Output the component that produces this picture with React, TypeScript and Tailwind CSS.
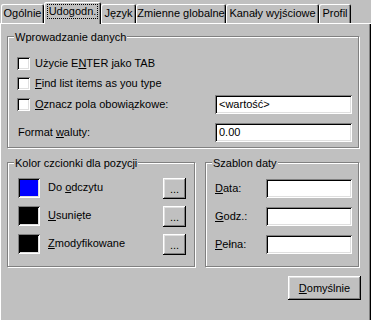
import React from "react";

const RAISED =
  "shadow-[inset_-1px_-1px_#000,inset_1px_1px_#fff,inset_-2px_-2px_#808080,inset_2px_2px_#dfdfdf]";
const SUNKEN =
  "shadow-[inset_1px_1px_#808080,inset_-1px_-1px_#fff,inset_2px_2px_#000,inset_-2px_-2px_#dfdfdf]";
const TAB = "shadow-[inset_1px_1px_#fff,inset_-1px_0_#000,inset_-2px_0_#808080] rounded-t-[2px]";
const ETCHED = "border border-[#808080] shadow-[inset_1px_1px_#fff,1px_1px_#fff]";

function Tab({ label, w }: { label: string; w: string }) {
  return (
    <div className={`${w} h-[19px] ${TAB} flex justify-center items-start pt-[3px] leading-[13px] whitespace-nowrap`}>
      {label}
    </div>
  );
}

function Group({ title, className, children }: { title: string; className: string; children: React.ReactNode }) {
  return (
    <div className={`relative ${ETCHED} ${className}`}>
      <div className="absolute -top-[5px] left-[6px] bg-[#c0c0c0] px-[1px] leading-[11px] whitespace-nowrap">{title}</div>
      {children}
    </div>
  );
}

function CheckBox() {
  return <div className={`w-[13px] h-[13px] bg-white shrink-0 ${SUNKEN}`} />;
}

function Field({ w, value }: { w: string; value?: string }) {
  return (
    <div className={`${w} h-[19px] bg-white ${SUNKEN} flex items-center pl-[4px] leading-[13px] shrink-0`}>
      {value}
    </div>
  );
}

function DotsButton() {
  return (
    <div className={`w-[23px] h-[21px] ml-auto ${RAISED} flex items-end justify-center pb-[4px] leading-[11px]`}>
      ...
    </div>
  );
}

export default function App() {
  return (
    <div className="w-[371px] h-[320px] bg-[#c0c0c0] overflow-hidden flex flex-col text-[11px] text-black font-['Liberation_Sans',Arial,sans-serif]">
      {/* tab strip */}
      <div className="h-[23px] flex items-end pl-[1px] shrink-0">
        <Tab label="Ogólnie" w="w-[43px]" />
        <div className={`relative z-10 w-[57px] h-[22px] -mb-[1px] bg-[#c0c0c0] ${TAB} flex justify-center items-start pt-[2px]`}>
          <span className="border border-dotted border-black px-[1px] h-[15px] leading-[13px] whitespace-nowrap">Udogodn.</span>
        </div>
        <Tab label="Język" w="w-[35px]" />
        <Tab label="Zmienne globalne" w="w-[90px]" />
        <Tab label="Kanały wyjściowe" w="w-[93px]" />
        <Tab label="Profil" w="w-[32px]" />
      </div>

      {/* panel */}
      <div className="flex-1 shadow-[inset_1px_1px_#fff,inset_-1px_0_#000,inset_-2px_0_#808080] pt-[13px] flex flex-col">
        <Group title="Wprowadzanie danych" className="ml-[7px] w-[352px] h-[112px] pt-[20px] pl-[9px] pr-[6px] flex flex-col">
          <div className="flex items-center h-[13px]">
            <CheckBox />
            <span className="ml-[5px] leading-[13px]">
              Użycie E<u>N</u>TER jako TAB
            </span>
          </div>
          <div className="flex items-center h-[13px] mt-[7px]">
            <CheckBox />
            <span className="ml-[5px] leading-[13px]">
              <u>F</u>ind list items as you type
            </span>
          </div>
          <div className="flex items-center h-[19px] mt-[5px]">
            <CheckBox />
            <span className="ml-[5px] leading-[13px]">
              <u>O</u>znacz pola obowiązkowe:
            </span>
            <div className="ml-auto">
              <Field w="w-[137px]" value="<wartość>" />
            </div>
          </div>
          <div className="flex items-center h-[19px] mt-[9px]">
            <span className="ml-[1px] leading-[13px]">
              Format <u>w</u>aluty:
            </span>
            <div className="ml-auto">
              <Field w="w-[137px]" value="0.00" />
            </div>
          </div>
        </Group>

        <div className="flex mt-[14px] ml-[7px]">
          <Group title="Kolor czcionki dla pozycji" className="w-[188px] h-[105px] pt-[15px] pl-[10px] pr-[8px] flex flex-col gap-[7px]">
            {[
              { c: "bg-[#0000ff]", l: <>Do <u>o</u>dczytu</> },
              { c: "bg-black", l: <><u>U</u>sunięte</> },
              { c: "bg-black", l: <><u>Z</u>modyfikowane</> },
            ].map((r, i) => (
              <div key={i} className="flex items-start h-[21px]">
                <div className={`w-[22px] h-[20px] ${r.c} ${SUNKEN}`} />
                <span className="ml-[8px] mt-[3px] leading-[13px]">{r.l}</span>
                <DotsButton />
              </div>
            ))}
          </Group>

          <Group title="Szablon daty" className="ml-[10px] w-[154px] h-[105px] pt-[16px] pl-[9px] pr-[6px] flex flex-col gap-[9px]">
            {[
              <><u>D</u>ata:</>,
              <><u>G</u>odz.:</>,
              <><u>P</u>ełna:</>,
            ].map((l, i) => (
              <div key={i} className="flex items-center h-[19px]">
                <span className="leading-[13px]">{l}</span>
                <div className="ml-auto">
                  <Field w="w-[86px]" />
                </div>
              </div>
            ))}
          </Group>
        </div>

        <div className="flex justify-end mt-[9px] mr-[10px]">
          <div className={`w-[73px] h-[24px] ${RAISED} flex items-center justify-center leading-[13px]`}>
            <span>
              <u>D</u>omyślnie
            </span>
          </div>
        </div>
      </div>
    </div>
  );
}
